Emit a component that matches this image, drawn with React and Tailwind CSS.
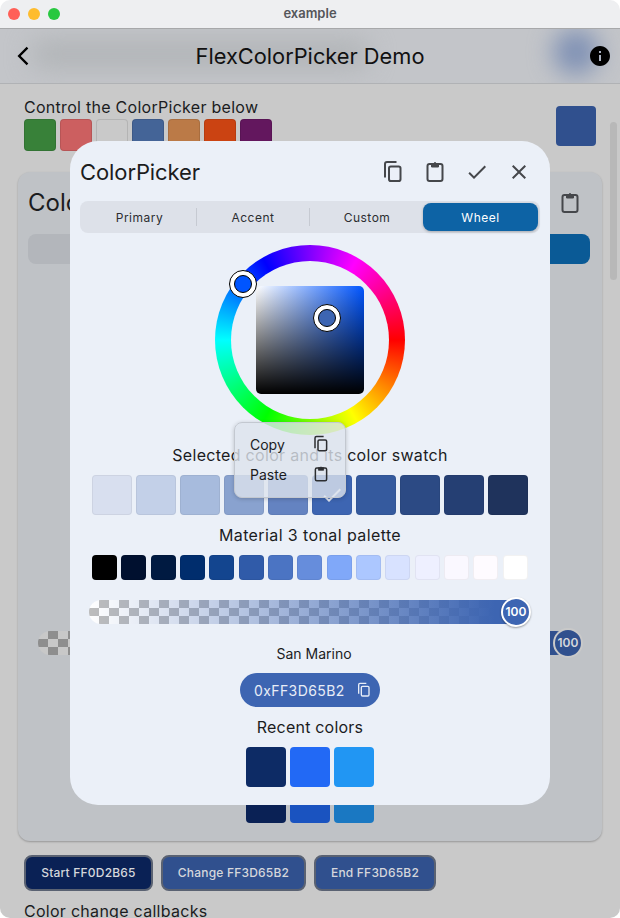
import { MdArrowBackIosNew, MdCheck, MdClose, MdInfo } from 'react-icons/md';

const controlSwatches = ['#388139', '#cc5f60', '#c9c9c9', '#446497', '#bb7a47', '#cb4312', '#63175e'];
const shades = ['#d8dfef', '#c3d0e8', '#a7bbdd', '#89a2cf', '#6483c1', '#3d65b2', '#355a9e', '#2c4a84', '#253f73', '#1f335c'];
const tones = ['#000000', '#00102f', '#001a41', '#002d6d', '#13458f', '#305ba9', '#4b74c3', '#668ddc', '#80a8f9', '#acc7ff', '#d8e2ff', '#eef0ff', '#faf8ff', '#fefbff', '#ffffff'];

function CopyIcon({ size = 24, className }) {
  return (
    <svg width={size} height={size} viewBox="0 0 24 24" fill="none" stroke="currentColor" strokeWidth="2" className={className}>
      <rect x="8" y="6.5" width="11.5" height="14.5" rx="1.8" />
      <path d="M4 17.5V4a2 2 0 0 1 2-2h9.5" />
    </svg>
  );
}

function PasteIcon({ size = 24, className }) {
  return (
    <svg width={size} height={size} viewBox="0 0 24 24" fill="none" stroke="currentColor" strokeWidth="2" className={className}>
      <rect x="4.5" y="4" width="15" height="17" rx="2" />
      <path d="M8.5 3.5h2.2a1.4 1.4 0 0 1 2.6 0h2.2V7h-7z" fill="currentColor" strokeWidth="1" />
    </svg>
  );
}

function Thumb({ color, className }) {
  return (
    <div className={`absolute h-[28px] w-[28px] rounded-full border border-black bg-white p-[4px] ${className}`}>
      <div className="h-full w-full rounded-full border border-black" style={{ backgroundColor: color }} />
    </div>
  );
}

function Background() {
  return (
    <div className="flex h-[834px] flex-col bg-[#c9c9c9]">
      {/* Control row */}
      <div className="flex justify-between px-[24px] pt-[12px]">
        <div>
          <div className="h-[23px] text-[16px] leading-[23px] tracking-[0.28px] text-[#1b1c1e]">Control the ColorPicker below</div>
          <div className="flex gap-[4px]">
            {controlSwatches.map((c, i) => (
              <div key={i} className="h-[32px] w-[32px] rounded-[4px] border border-black/10" style={{ backgroundColor: c }} />
            ))}
          </div>
        </div>
        <div className="mt-[10px] h-[40px] w-[40px] rounded-[4px] bg-[#30508e]" />
      </div>

      {/* Card behind the dialog */}
      <div className="ml-[18px] mr-[18px] mt-[21px] flex flex-col rounded-[12px] bg-[#bfc2c6] shadow-[0_1px_2px_rgba(0,0,0,0.25)]">
        <div className="flex h-[62px] items-center justify-between pl-[10px] pr-[20px]">
          <span className="text-[24px] text-[#1b1c1e]">ColorPicker</span>
          <PasteIcon className="text-[#45474b]" />
        </div>
        <div className="ml-[10px] mr-[12px] flex h-[30px] justify-end rounded-[8px] bg-[#b3b6bb]">
          <div className="w-[115px] rounded-[8px] bg-[#0a5a96]" />
        </div>
        <div className="relative ml-[20px] mt-[367px] h-[24px] w-[530px] rounded-full bg-[linear-gradient(to_right,transparent_50%,#30508e_80%),repeating-conic-gradient(#8e8e8e_0_25%,#c8c8c8_0_50%)] bg-[length:100%_100%,20px_16px]">
          <div className="absolute right-[-15px] top-[-3px] flex h-[30px] w-[30px] items-center justify-center rounded-full border-2 border-[#c9c9c9] bg-[#30508e] text-[12px] font-semibold text-[#d5d7dc]">
            100
          </div>
        </div>
        <div className="mb-[18px] mt-[128px] flex justify-center gap-[4px]">
          <div className="h-[40px] w-[40px] rounded-[4px] bg-[#0a2155]" />
          <div className="h-[40px] w-[40px] rounded-[4px] bg-[#1a53c0]" />
          <div className="h-[40px] w-[40px] rounded-[4px] bg-[#1a78c2]" />
        </div>
      </div>

      {/* Callback buttons */}
      <div className="ml-[24px] mt-[14px] flex gap-[8px] text-[12px] font-medium tracking-[0.2px] text-[#d5d7dc]">
        <div className="flex h-[36px] w-[129px] items-center justify-center rounded-[8px] border-2 border-[#5a6272] bg-[#0a2155]">Start FF0D2B65</div>
        <div className="flex h-[36px] w-[145px] items-center justify-center rounded-[8px] border-2 border-[#5a6272] bg-[#30508e]">Change FF3D65B2</div>
        <div className="flex h-[36px] w-[122px] items-center justify-center rounded-[8px] border-2 border-[#5a6272] bg-[#30508e]">End FF3D65B2</div>
      </div>
      <div className="ml-[24px] mt-[9px] text-[16px] leading-[22px] tracking-[0.28px] text-[#1b1c1e]">Color change callbacks</div>
    </div>
  );
}

function Wheel() {
  return (
    <div className="relative mx-auto mt-[12px] flex h-[190px] w-[190px] items-center justify-center rounded-full bg-[conic-gradient(from_90deg,#f00,#ff0,#0f0,#0ff,#00f,#f0f,#f00)]">
      <div className="flex h-[158px] w-[158px] items-center justify-center rounded-full bg-[#ebf0f8]">
        <div className="h-[108px] w-[108px] rounded-[5px] bg-[linear-gradient(to_top,#000,transparent),linear-gradient(to_right,#fff,#0055ff)]" />
      </div>
      <Thumb color="#0055ff" className="left-[14px] top-[25px]" />
      <Thumb color="#3d65b2" className="left-[98px] top-[59px]" />
    </div>
  );
}

function Dialog() {
  return (
    <div className="absolute left-[70px] top-[141px] h-[664px] w-[480px] rounded-[28px] bg-[#ebf0f8] text-[#1b1c1e]">
      <div className="flex h-[60px] items-center justify-between pl-[10px] pr-[19px] pt-[2px]">
        <span className="text-[22px] tracking-[-0.1px]">ColorPicker</span>
        <div className="flex gap-[18px] text-[#45474b]">
          <CopyIcon />
          <PasteIcon />
          <MdCheck size={24} />
          <MdClose size={24} />
        </div>
      </div>

      {/* Picker type tabs */}
      <div className="mx-[10px] flex h-[32px] items-center rounded-[8px] bg-[#dde1e9] pl-[3px] text-[12px] tracking-[0.5px] text-[#2c2e31]">
        <div className="flex h-[18px] w-[114px] items-center justify-center border-r border-[#c6cad2] pt-[2px]">Primary</div>
        <div className="flex h-[18px] w-[113px] items-center justify-center border-r border-[#c6cad2] pt-[2px]">Accent</div>
        <div className="flex h-[18px] w-[114px] items-center justify-center pt-[2px]">Custom</div>
        <div className="ml-[-1px] flex h-[28px] w-[115px] items-center justify-center rounded-[8px] bg-[#0d63a5] pt-[2px] text-white shadow-[0_1px_3px_rgba(0,0,0,0.25)]">
          Wheel
        </div>
      </div>

      <Wheel />

      <div className="mt-[10px] h-[20px] text-center text-[16px] leading-[20px] tracking-[0.3px]">Selected color and its color swatch</div>
      <div className="mx-auto mt-[10px] flex w-[436px] justify-between">
        {shades.map((c, i) => (
          <div key={i} className="flex h-[40px] w-[40px] items-center justify-center rounded-[4px] border border-black/5" style={{ backgroundColor: c }}>
            {i === 5 && <MdCheck size={24} className="text-[#dfe5f1]" />}
          </div>
        ))}
      </div>

      <div className="mt-[10px] h-[20px] text-center text-[16px] leading-[20px] tracking-[0.4px]">Material 3 tonal palette</div>
      <div className="mx-auto mt-[10px] flex w-[436px] justify-between">
        {tones.map((c, i) => (
          <div key={i} className="h-[25px] w-[25px] rounded-[4px] border border-black/5" style={{ backgroundColor: c }} />
        ))}
      </div>

      {/* Opacity slider */}
      <div className="relative ml-[19px] mt-[20px] h-[24px] w-[441px] rounded-full bg-[linear-gradient(to_right,transparent,#3d65b2_92%),repeating-conic-gradient(#bdbdbd_0_25%,#fff_0_50%)] bg-[length:100%_100%,20px_16px]">
        <div className="absolute right-[-1px] top-[-3px] flex h-[30px] w-[30px] items-center justify-center rounded-full border-2 border-white bg-[#3d65b2] text-[12px] font-semibold text-white shadow-[0_1px_2px_rgba(0,0,0,0.35)]">
          100
        </div>
      </div>

      <div className="ml-[8px] mt-[20px] h-[20px] text-center text-[14px] leading-[20px]">San Marino</div>
      <div className="mx-auto mt-[9px] flex h-[34px] w-[140px] items-center gap-[11px] rounded-full bg-[#3d65b2] pl-[14px] text-[14px] tracking-[0.4px] text-[#e8edf7]">
        0xFF3D65B2
        <CopyIcon size={16} />
      </div>

      <div className="mt-[10px] h-[20px] text-center text-[16px] leading-[20px] tracking-[0.2px]">Recent colors</div>
      <div className="mt-[10px] flex justify-center gap-[4px]">
        <div className="h-[40px] w-[40px] rounded-[4px] bg-[#0d2b65]" />
        <div className="h-[40px] w-[40px] rounded-[4px] bg-[#2269f5]" />
        <div className="h-[40px] w-[40px] rounded-[4px] bg-[#2196f3]" />
      </div>

      {/* Copy / paste context menu */}
      <div className="absolute left-[164px] top-[281px] flex h-[76px] w-[112px] flex-col justify-center gap-[8px] rounded-[8px] border border-[#c3c8d0] bg-[#dde3ec]/80 pb-[2px] pl-[15px] pr-[15px] text-[14px] shadow-[0_1px_4px_rgba(0,0,0,0.2)]">
        <div className="flex h-[22px] items-center justify-between">
          Copy
          <CopyIcon size={18} className="text-[#2c2e31]" />
        </div>
        <div className="flex h-[22px] items-center justify-between">
          Paste
          <PasteIcon size={18} className="text-[#2c2e31]" />
        </div>
      </div>
    </div>
  );
}

export default function App() {
  return (
    <div className="relative h-[918px] w-[620px] overflow-hidden rounded-[10px] bg-white font-['Inter','Liberation_Sans',sans-serif]">
      {/* Title bar */}
      <div className="relative flex h-[29px] items-center justify-center border-b border-[#a7a8aa] bg-[#eeeff1]">
        <div className="absolute left-[8px] flex gap-[8px]">
          <div className="h-[12px] w-[12px] rounded-full bg-[#ff5f57]" />
          <div className="h-[12px] w-[12px] rounded-full bg-[#febc2e]" />
          <div className="h-[12px] w-[12px] rounded-full bg-[#28c840]" />
        </div>
        <span className="text-[13px] font-semibold text-[#55565a]">example</span>
      </div>

      {/* App bar */}
      <div className="relative flex h-[55px] items-center justify-center overflow-hidden border-b border-[#b0b2b5] bg-[#c3c5c9]">
        <div className="absolute left-[30px] top-[10px] h-[30px] w-[340px] rounded-full bg-[#b2b5b8] blur-md" />
        <div className="absolute left-[553px] top-[0px] h-[46px] w-[46px] rounded-full bg-[#7e90b4] blur-md" />
        <MdArrowBackIosNew size={22} className="absolute left-[12px] text-black" />
        <span className="relative text-[21.8px] text-[#111]">FlexColorPicker Demo</span>
        <MdInfo size={24} className="absolute left-[588px] text-black" />
      </div>

      <Background />
      <Dialog />

      {/* Scrollbar */}
      <div className="absolute left-[610px] top-[122px] h-[158px] w-[7px] rounded-full bg-[#b8b8b8]" />
    </div>
  );
}
